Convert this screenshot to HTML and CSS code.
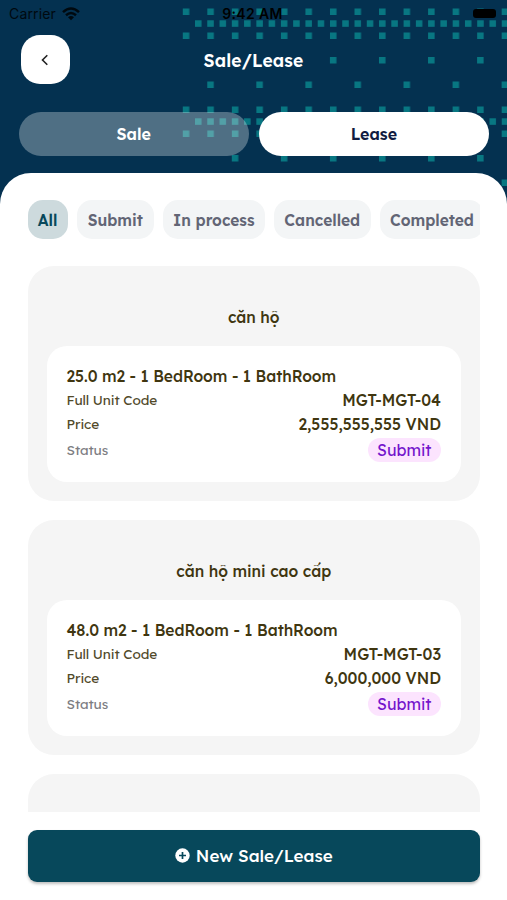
FILE: index.html
```html
<!DOCTYPE html>
<html lang="vi">
<head>
<meta charset="utf-8">
<meta name="viewport" content="width=device-width, initial-scale=1">
<title>Sale/Lease</title>
<link rel="stylesheet" href="styles.css">
</head>
<body>
<div class="screen">
  <header class="hero">
    <svg class="dots" width="507" height="210" aria-hidden="true">
      <defs>
        <pattern id="wide" x="182.8" y="0" width="24.53" height="98" patternUnits="userSpaceOnUse">
          <rect x="0" y="8.5" width="6.5" height="6.5"/>
          <rect x="0" y="32.5" width="6.5" height="6.5"/>
        </pattern>
        <pattern id="dense" x="195" y="0" width="12.27" height="98" patternUnits="userSpaceOnUse">
          <rect x="0" y="20.3" width="6.5" height="6.5"/>
        </pattern>
        <pattern id="sparse" x="231.8" y="0" width="49.06" height="98" patternUnits="userSpaceOnUse">
          <rect x="0" y="57" width="6.5" height="6.5"/>
          <rect x="24.53" y="81.5" width="6.5" height="6.5"/>
        </pattern>
      </defs>
      <g class="dot-layer">
        <rect x="182" width="325" height="196" fill="url(#wide)"/>
        <rect x="194" width="313" height="196" fill="url(#dense)"/>
        <rect x="305" width="202" height="80" fill="url(#sparse)"/>
        <rect x="205" y="80" width="302" height="110" fill="url(#sparse)"/>
      </g>
    </svg>
    <div class="status-bar">
      <span class="carrier">Carrier
        <svg width="18" height="14" viewBox="0 0 18 14"><g fill="none" stroke="#000" stroke-width="2.5"><path d="M1 5.2Q9-2.2 17 5.2M4 8.2Q9 3.8 14 8.2"/></g><path d="M6 10.2Q9 7.8 12 10.2L9 13.3Z"/></svg>
      </span>
      <span class="clock">9:42 AM</span>
      <span class="battery"></span>
    </div>
    <div class="title-row">
      <button class="back" aria-label="Back"><svg width="10" height="14" viewBox="0 0 10 14"><path d="M7.3 2.2 2.5 7l4.8 4.8" fill="none" stroke="#222" stroke-width="1.6"/></svg></button>
      <h1>Sale/Lease</h1>
      <span></span>
    </div>
    <nav class="tabs"><button class="tab">Sale</button><button class="tab active">Lease</button></nav>
  </header>
  <main class="sheet">
    <div class="filters">
      <button class="chip selected">All</button><button class="chip submit">Submit</button><button class="chip process">In process</button><button class="chip cancelled">Cancelled</button><button class="chip completed">Completed</button>
    </div>
    <div class="list">
      <article class="card">
        <h2>căn hộ</h2>
        <div class="details">
          <h3>25.0 m2 - 1 BedRoom - 1 BathRoom</h3>
          <div class="row"><span>Full Unit Code</span><strong>MGT-MGT-04</strong></div>
          <div class="row"><span>Price</span><strong>2,555,555,555 VND</strong></div>
          <div class="row status"><span>Status</span><em>Submit</em></div>
        </div>
      </article>
      <article class="card">
        <h2>căn hộ mini cao cấp</h2>
        <div class="details">
          <h3>48.0 m2 - 1 BedRoom - 1 BathRoom</h3>
          <div class="row"><span>Full Unit Code</span><strong>MGT-MGT-03</strong></div>
          <div class="row"><span>Price</span><strong>6,000,000 VND</strong></div>
          <div class="row status"><span>Status</span><em>Submit</em></div>
        </div>
      </article>
      <article class="card"></article>
    </div>
    <button class="create"><svg width="15" height="15" viewBox="0 0 15 15"><circle cx="7.5" cy="7.5" r="7.2" fill="#fff"/><path d="M7.5 4v7M4 7.5h7" stroke="#07485b" stroke-width="1.7"/></svg><span>New Sale/Lease</span></button>
  </main>
</div>
</body>
</html>
```
FILE: styles.css
```css
* { box-sizing: border-box; }
body { margin: 0; font-family: Lexend, Inter, sans-serif; background: #fff; }
button { border: 0; padding: 0; font: inherit; }
h1, h2, h3 { margin: 0; }
.screen { width: 507px; height: 900px; overflow: hidden; display: flex; flex-direction: column; background: #043150; }
.hero { height: 173px; flex: none; position: relative; }
.dots { position: absolute; left: 0; top: 0; }
.dots pattern { fill: #087782; }
.status-bar { position: relative; height: 27px; display: grid; grid-template-columns: 1fr auto 1fr; align-items: center; padding: 0 11px 0 9px; font-family: Inter, sans-serif; font-size: 14px; color: #000; }
.carrier { display: flex; align-items: center; gap: 6px; letter-spacing: .15px; opacity: .8; }
.clock { font-weight: 600; letter-spacing: .35px; }
.battery { justify-self: end; width: 23px; height: 9px; border-radius: 3px; background: #000; }
.title-row { position: relative; margin-top: 8px; padding: 0 20.5px; display: grid; grid-template-columns: 49px 1fr 49px; align-items: center; }
.back { width: 49px; height: 49px; border-radius: 19px; background: #fff; display: grid; place-items: center; }
h1 { text-align: center; color: #fff; font-size: 17.5px; font-weight: 600; letter-spacing: .15px; }
.tabs { position: relative; display: flex; gap: 10px; padding: 0 18px 0 18.5px; margin-top: 27.5px; }
.tab { flex: 1; height: 44.5px; border-radius: 23px; color: #fff; background: rgba(255,255,255,.3); font-size: 16px; font-weight: 600; }
.tab.active { background: #fff; color: #111b40; }
.sheet { position: relative; flex: 1; min-height: 0; background: #fff; border-radius: 31px 31px 0 0; padding: 27px 27px 18px 27.5px; display: flex; flex-direction: column; }
.filters { display: flex; gap: 9.5px; height: 39px; flex: none; overflow: hidden; border-radius: 0 4px 4px 0; }
.chip { flex: none; width: 101.5px; border-radius: 15px; background: #f3f5f6; color: #626575; font-size: 15.5px; font-weight: 600; white-space: nowrap; }
.chip.selected { width: 40px; background: #cddadd; color: #07485b; }
.chip.submit { width: 76.5px; }
.chip.cancelled { width: 96.5px; }
.chip.completed { width: 104px; }
.list { margin-top: 26.5px; height: 546.5px; flex: none; overflow: hidden; }
.card { height: 235.5px; margin-bottom: 18.5px; background: #f5f5f5; border-radius: 26px; padding: 39.5px 19px 19px; }
h2 { height: 41px; line-height: 24px; text-align: center; color: #403610; font-size: 15.6px; font-weight: 500; letter-spacing: -.02px; }
.details { height: 135.5px; background: #fff; border-radius: 20px; padding: 17.5px 20px; color: #403610; }
h3 { font-size: 15.6px; line-height: 24px; font-weight: 500; white-space: nowrap; letter-spacing: -.04px; }
.row { display: flex; justify-content: space-between; align-items: center; height: 24px; font-size: 13.6px; font-weight: 400; letter-spacing: -.1px; }
.row span { opacity: .9; }
.row strong { font-size: 15.6px; font-weight: 500; letter-spacing: 0; }
.row.status { height: 28px; color: #707075; }
.row em { width: 73.5px; height: 24px; line-height: 25px; border-radius: 12px; text-align: center; font-style: normal; font-size: 15.8px; font-weight: 400; letter-spacing: 0; color: #7415cc; background: #fce4fe; }
.create { margin-top: 18px; height: 51.5px; flex: none; border-radius: 9px; background: #07485b; color: #fff; display: flex; justify-content: center; align-items: center; gap: 6px; font-size: 17px; font-weight: 500; box-shadow: 0 2px 3px rgba(0,0,0,.25); }
```
